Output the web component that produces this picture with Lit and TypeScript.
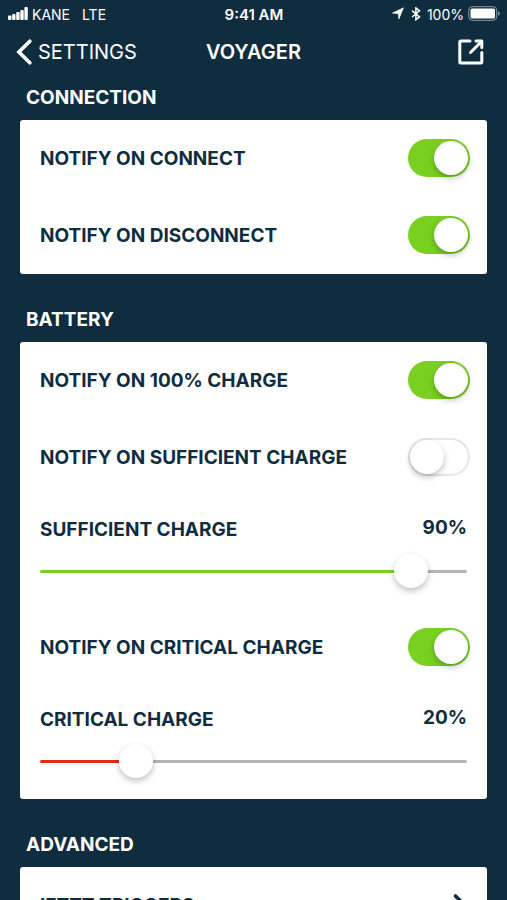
import { LitElement, html, css } from "lit";
import { customElement, property, state } from "lit/decorators.js";

@customElement("toggle-row")
class ToggleRow extends LitElement {
  @property() label = "";
  @property({ type: Boolean }) on = false;

  static styles = css`
    :host {
      display: block;
    }
    .row {
      display: flex;
      align-items: center;
      justify-content: space-between;
      box-sizing: border-box;
      min-height: 77px;
      padding: 0 17px 1px 20px;
    }
    .switch {
      appearance: none;
      flex: none;
      display: flex;
      box-sizing: border-box;
      width: 62px;
      height: 38px;
      margin: 0;
      padding: 2px;
      border-radius: 19px;
      background: #fff;
      box-shadow: inset 0 0 0 2px #e6e6e6;
      cursor: pointer;
    }
    .switch::before {
      content: "";
      width: 34px;
      height: 34px;
      border-radius: 50%;
      background: #fff;
      box-shadow: 0 3px 6px rgba(0, 0, 0, 0.25);
    }
    .switch:checked {
      justify-content: flex-end;
      background: #79d021;
      box-shadow: none;
    }
  `;

  render() {
    return html`
      <label class="row">
        <span>${this.label}</span>
        <input
          class="switch"
          type="checkbox"
          role="switch"
          .checked=${this.on}
          @change=${(e: Event) => (this.on = (e.target as HTMLInputElement).checked)}
        />
      </label>
    `;
  }
}

@customElement("slider-row")
class SliderRow extends LitElement {
  @property() label = "";
  @property({ type: Number }) value = 0;
  @property() tone = "green";

  static styles = css`
    :host {
      display: block;
    }
    .row {
      padding: 20px 20px 21px;
    }
    .head {
      display: flex;
      justify-content: space-between;
      line-height: 24px;
      padding-bottom: 12px;
    }
    .head label {
      padding-top: 2px;
    }
    .slider {
      appearance: none;
      display: block;
      width: 100%;
      height: 34px;
      margin: 0;
      background: none;
      cursor: pointer;
    }
    .green {
      --tone: #79d021;
    }
    .red {
      --tone: #e32a1b;
    }
    .slider::-webkit-slider-runnable-track {
      height: 3px;
      border-radius: 2px;
      background: linear-gradient(var(--tone), var(--tone)) left / var(--fill) 100% no-repeat #b4b4b4;
    }
    .slider::-webkit-slider-thumb {
      appearance: none;
      width: 34px;
      height: 34px;
      margin-top: -16px;
      border-radius: 50%;
      background: #fff;
      box-shadow: 0 3px 6px rgba(0, 0, 0, 0.25);
    }
  `;

  render() {
    return html`
      <div class="row">
        <div class="head">
          <label for="range">${this.label}</label>
          <output for="range">${this.value}%</output>
        </div>
        <input
          id="range"
          class="slider ${this.tone}"
          type="range"
          min="0"
          max="100"
          .value=${String(this.value)}
          style="--fill: ${this.value}%"
          @input=${(e: Event) => (this.value = Number((e.target as HTMLInputElement).value))}
        />
      </div>
    `;
  }
}

@customElement("app-root")
class AppRoot extends LitElement {
  @state() private device = "VOYAGER";

  static styles = css`
    :host {
      display: flex;
      flex-direction: column;
      height: 100vh;
      background: #102d3f;
      color: #fff;
      font-family: Inter, "Liberation Sans", sans-serif;
      font-size: 19px;
      font-weight: 650;
    }
    .status,
    .nav {
      display: grid;
      grid-template-columns: 1fr auto 1fr;
      align-items: center;
      flex: none;
    }
    .status {
      height: 28px;
      padding: 0 7px 0 8px;
      font-size: 14px;
    }
    .side {
      display: flex;
      align-items: center;
      font-weight: 400;
    }
    .end {
      justify-content: flex-end;
    }
    .clock {
      font-size: 15px;
      font-weight: 600;
    }
    .carrier {
      margin: 0 12px 0 4px;
    }
    .bluetooth {
      margin: 0 6px 0 7px;
    }
    .battery {
      margin-left: 4px;
    }
    .nav {
      height: 48px;
      padding: 0 16px;
    }
    .title {
      margin: 0;
      font-size: 20px;
      font-weight: 600;
    }
    .back {
      display: flex;
      align-items: center;
      gap: 5px;
      color: inherit;
      font-size: 20px;
      font-weight: 400;
      text-decoration: none;
    }
    .share {
      justify-self: end;
      padding: 0 7px;
      border: 0;
      background: none;
      color: inherit;
      cursor: pointer;
    }
    svg {
      display: block;
      flex: none;
    }
    main {
      flex: 1;
      min-height: 0;
      overflow-y: auto;
      scrollbar-width: none;
      padding: 10px 20px 0;
    }
    section {
      margin-bottom: 34px;
    }
    h2 {
      margin: 0;
      padding: 0 6px 10px;
      font-size: 19px;
      font-weight: 650;
      line-height: 24px;
    }
    .card {
      border-radius: 3px;
      background: #fff;
      color: #102d3f;
    }
    .link {
      display: flex;
      align-items: center;
      justify-content: space-between;
      min-height: 76px;
      padding: 0 20px;
      color: inherit;
      text-decoration: none;
    }
  `;

  render() {
    return html`
      <div class="status">
        <div class="side">
          <svg width="20" height="14" viewBox="0 0 20 14" fill="currentColor" aria-hidden="true">
            <rect x="0" y="8.500" width="3.400" height="4.500" rx="1" />
            <rect x="4.100" y="7" width="3.400" height="6" rx="1" />
            <rect x="8.200" y="5" width="3.400" height="8" rx="1" />
            <rect x="12.300" y="3" width="3.400" height="10" rx="1" />
            <rect x="16.400" y="0" width="3.400" height="13" rx="1" />
          </svg>
          <span class="carrier">KANE</span>
          <span>LTE</span>
        </div>
        <span class="clock">9:41 AM</span>
        <div class="side end">
          <svg width="12" height="14" viewBox="0 0 12 14" fill="currentColor" stroke="currentColor" stroke-width="0.600" stroke-linejoin="round" aria-hidden="true">
            <path d="M11.500 0.800 6.900 12 6.300 6.700 0.400 6.100Z" />
          </svg>
          <svg class="bluetooth" width="10" height="14" viewBox="0 0 10 14" fill="none" stroke="currentColor" stroke-width="1.500" aria-hidden="true">
            <path d="M1 3.600 8.500 9.900 4.900 12.700V0.900L8.500 3.800 1 10" />
          </svg>
          <span>100%</span>
          <svg class="battery" width="32" height="16" viewBox="0 0 32 16" aria-hidden="true">
            <rect x="0.700" y="0.700" width="28" height="13.600" rx="3.500" fill="none" stroke="#8d9ca6" />
            <rect x="2.500" y="2.500" width="24.500" height="10" rx="1.500" fill="#fff" />
            <path d="M30 5.200q1.700.8 1.700 2.300t-1.700 2.300Z" fill="#8d9ca6" />
          </svg>
        </div>
      </div>
      <nav class="nav">
        <a class="back" href="#settings">
          <svg width="17" height="26" viewBox="0 0 17 26" fill="none" stroke="currentColor" stroke-width="3.600" stroke-linecap="round" aria-hidden="true">
            <path d="M13.800 2.200 2.900 13 13.800 23.800" />
          </svg>
          SETTINGS
        </a>
        <h1 class="title">${this.device}</h1>
        <button class="share" aria-label="Open">
          <svg width="26" height="26" viewBox="0 0 26 26" fill="none" stroke="currentColor" stroke-width="3" stroke-linecap="round" aria-hidden="true">
            <path d="M12 2H3Q1.800 2 1.800 3V23Q1.800 24 3 24H22.500Q23.800 24 23.800 23V13.500" />
            <path d="M12.500 13.500 22 4" />
            <path d="M18 2H23.800V8.500" stroke-linejoin="round" />
          </svg>
        </button>
      </nav>
      <main>
        <section>
          <h2>CONNECTION</h2>
          <div class="card">
            <toggle-row label="NOTIFY ON CONNECT" on></toggle-row>
            <toggle-row label="NOTIFY ON DISCONNECT" on></toggle-row>
          </div>
        </section>
        <section>
          <h2>BATTERY</h2>
          <div class="card">
            <toggle-row label="NOTIFY ON 100% CHARGE" on></toggle-row>
            <toggle-row label="NOTIFY ON SUFFICIENT CHARGE"></toggle-row>
            <slider-row label="SUFFICIENT CHARGE" value="90"></slider-row>
            <toggle-row label="NOTIFY ON CRITICAL CHARGE" on></toggle-row>
            <slider-row label="CRITICAL CHARGE" value="20" tone="red"></slider-row>
          </div>
        </section>
        <section>
          <h2>ADVANCED</h2>
          <div class="card">
            <a class="link" href="#ifttt">
              <span>IFTTT TRIGGERS</span>
              <svg width="14" height="22" viewBox="0 0 14 22" fill="none" stroke="currentColor" stroke-width="3.600" stroke-linecap="round" aria-hidden="true">
                <path d="M2.500 2 11.500 11 2.500 20" />
              </svg>
            </a>
          </div>
        </section>
      </main>
    `;
  }
}
